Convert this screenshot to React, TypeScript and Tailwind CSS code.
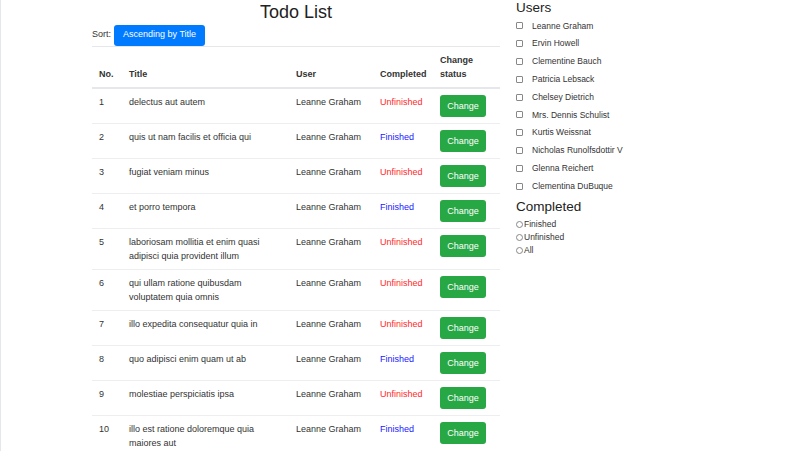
const todos = [
  { id: 1, title: 'delectus aut autem', done: false },
  { id: 2, title: 'quis ut nam facilis et officia qui', done: true },
  { id: 3, title: 'fugiat veniam minus', done: false },
  { id: 4, title: 'et porro tempora', done: true },
  { id: 5, title: 'laboriosam mollitia et enim quasi adipisci quia provident illum', done: false },
  { id: 6, title: 'qui ullam ratione quibusdam voluptatem quia omnis', done: false },
  { id: 7, title: 'illo expedita consequatur quia in', done: false },
  { id: 8, title: 'quo adipisci enim quam ut ab', done: true },
  { id: 9, title: 'molestiae perspiciatis ipsa', done: false },
  { id: 10, title: 'illo est ratione doloremque quia maiores aut', done: true },
];

const users = [
  'Leanne Graham',
  'Ervin Howell',
  'Clementine Bauch',
  'Patricia Lebsack',
  'Chelsey Dietrich',
  'Mrs. Dennis Schulist',
  'Kurtis Weissnat',
  'Nicholas Runolfsdottir V',
  'Glenna Reichert',
  'Clementina DuBuque',
];

export default function App() {
  return (
    <div className="h-[451px] w-[797px] overflow-hidden border-l border-gray-200 bg-white font-['Liberation_Sans',Arial,sans-serif] text-[#333]">
      <div className="flex pl-[91px]">
        {/* main column */}
        <div className="w-[408px]">
          <h2 className="text-center text-[18px] leading-[24px] text-[#222]">Todo List</h2>
          <div className="flex h-[22px] items-center gap-[3px] text-[9px]">
            <span>Sort:</span>
            <button className="h-[21px] rounded-[3px] bg-[#007bff] px-[9px] text-[9px] text-white">
              Ascending by Title
            </button>
          </div>
          <table className="w-full table-fixed border-collapse text-left text-[9px] leading-[14px]">
            <thead>
              <tr className="border-t border-b-2 border-[#e5e7eb]">
                <th className="w-[30px] px-[7px] py-[6px] align-bottom font-bold">No.</th>
                <th className="w-[167px] px-[7px] py-[6px] align-bottom font-bold">Title</th>
                <th className="w-[84px] px-[7px] py-[6px] align-bottom font-bold">User</th>
                <th className="w-[60px] px-[7px] py-[6px] align-bottom font-bold">Completed</th>
                <th className="px-[7px] py-[6px] align-bottom font-bold">
                  Change
                  <br />
                  status
                </th>
              </tr>
            </thead>
            <tbody>
              {todos.map((t) => (
                <tr key={t.id} className="border-b border-[#eceef0]">
                  <td className="px-[7px] py-[6px] align-top">{t.id}</td>
                  <td className="px-[7px] py-[6px] align-top">{t.title}</td>
                  <td className="px-[7px] py-[6px] align-top whitespace-nowrap">Leanne Graham</td>
                  <td className={`px-[7px] py-[6px] align-top ${t.done ? 'text-[#2020ff]' : 'text-[#ff2a2a]'}`}>
                    {t.done ? 'Finished' : 'Unfinished'}
                  </td>
                  <td className="px-[7px] py-[6px] align-top">
                    <button className="h-[22px] w-[46px] rounded-[3px] bg-[#28a745] text-[9px] text-white">
                      Change
                    </button>
                  </td>
                </tr>
              ))}
            </tbody>
          </table>
        </div>

        {/* sidebar */}
        <div className="ml-[16px] w-[190px]">
          <h3 className="text-[13.5px] leading-[16px] text-[#222]">Users</h3>
          <div className="mt-[1px] flex flex-col">
            {users.map((u) => (
              <label key={u} className="flex h-[17.8px] items-center text-[8.5px]">
                <span className="mr-[9px] h-[7px] w-[7px] rounded-[1px] border border-[#888]" />
                {u}
              </label>
            ))}
          </div>
          <h3 className="mt-[3px] text-[13.5px] leading-[18px] text-[#222]">Completed</h3>
          <div className="mt-[2px] flex flex-col">
            {['Finished', 'Unfinished', 'All'].map((r) => (
              <label key={r} className="flex h-[13px] items-center text-[8.5px]">
                <span className="mr-[1px] h-[7px] w-[7px] rounded-full border border-[#888]" />
                {r}
              </label>
            ))}
          </div>
        </div>
      </div>
    </div>
  );
}
